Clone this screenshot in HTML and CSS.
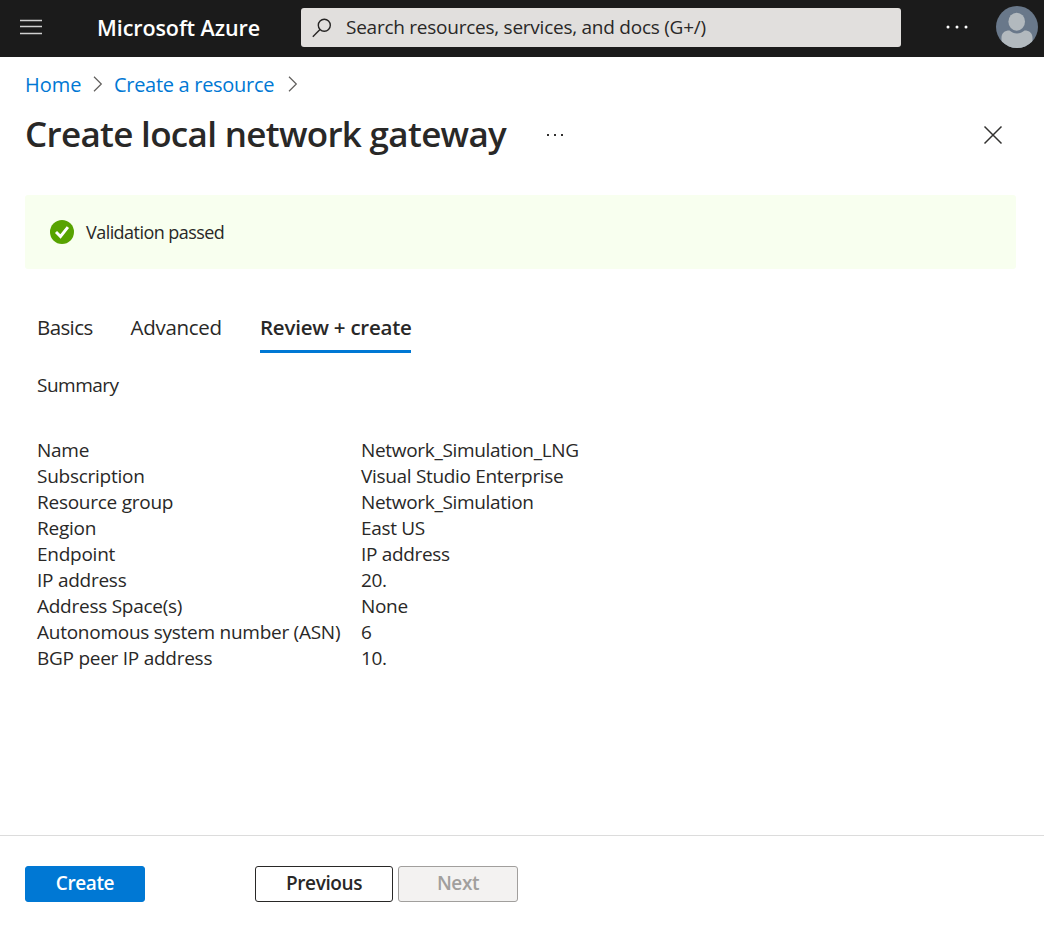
FILE: index.html
```html
<!DOCTYPE html>
<html lang="en">
<head>
<meta charset="utf-8">
<title>Create local network gateway - Microsoft Azure</title>
<link rel="stylesheet" href="styles.css">
</head>
<body>
<header class="topbar">
  <svg class="menu-icon" width="22" height="16" viewBox="0 0 22 16"><path d="M0 1.500h22M0 7.500h22M0 14.500h22" stroke="#d0d0d0" stroke-width="1.700"/></svg>
  <span class="brand">Microsoft Azure</span>
  <div class="search">
    <svg class="search-icon" width="20" height="20" viewBox="0 0 20 20" fill="none" stroke="#252423" stroke-width="1.400"><circle cx="12.300" cy="7.300" r="6"/><path d="M8 11.600L.8 18.800"/></svg>
    <span class="search-text">Search resources, services, and docs (G+/)</span>
  </div>
  <svg class="more-icon" width="22" height="4" viewBox="0 0 22 4" fill="#fff"><circle cx="2" cy="2" r="1.500"/><circle cx="11" cy="2" r="1.500"/><circle cx="20" cy="2" r="1.500"/></svg>
  <svg class="avatar" width="42" height="42" viewBox="0 0 42 42"><defs><clipPath id="disc"><circle cx="21" cy="21" r="21"/></clipPath></defs><g clip-path="url(#disc)"><path fill="#69788a" d="M0 0h42v42H0z"/><path fill="#b2b9be" d="M5.500 42V32c0-5 3-7.500 8-7.500 2.500 2 4.500 3 7.500 3s5-1 7.500-3c5 0 8 2.500 8 7.500v10z"/><ellipse cx="20.700" cy="16" rx="9.300" ry="10.200" fill="#69788a"/><ellipse cx="20.700" cy="15.700" rx="8.300" ry="9" fill="#b2b9be"/></g></svg>
</header>
<nav class="crumbs">
  <a class="crumb home">Home</a>
  <svg class="chev" width="10" height="16" viewBox="0 0 10 16" fill="none" stroke="#605e5c" stroke-width="1.200"><path d="M1 .8L8.300 8 1 15.200"/></svg>
  <a class="crumb res">Create a resource</a>
  <svg class="chev" width="10" height="16" viewBox="0 0 10 16" fill="none" stroke="#605e5c" stroke-width="1.200"><path d="M1 .8L8.300 8 1 15.200"/></svg>
</nav>
<div class="title-row">
  <h1 class="title">Create local network gateway</h1>
  <svg class="title-more" width="18" height="3" viewBox="0 0 18 3" fill="#323130"><path d="M1 0h2v2H1zM8 0h2v2H8zM15 0h2v2h-2z"/></svg>
  <svg class="close" width="20" height="20" viewBox="0 0 20 20" stroke="#323130" stroke-width="1.500"><path d="M1.500 1.500l17 17M18.500 1.500l-17 17"/></svg>
</div>
<main class="content">
  <div class="banner">
    <svg width="24" height="24" viewBox="0 0 24 24"><circle cx="12" cy="12" r="12" fill="#57a300"/><path d="M6 12l4.500 4.500 7.400-9.300" fill="none" stroke="#fff" stroke-width="2.900"/></svg>
    <span class="banner-text">Validation passed</span>
  </div>
  <div class="tabs">
    <span class="tab basics">Basics</span>
    <span class="tab advanced">Advanced</span>
    <span class="tab active">Review + create</span>
  </div>
  <h2 class="summary">Summary</h2>
  <dl class="details">
    <dt>Name</dt><dd>Network_Simulation_LNG</dd>
    <dt>Subscription</dt><dd>Visual Studio Enterprise</dd>
    <dt>Resource group</dt><dd>Network_Simulation</dd>
    <dt>Region</dt><dd>East US</dd>
    <dt>Endpoint</dt><dd>IP address</dd>
    <dt>IP address</dt><dd>20.</dd>
    <dt>Address Space(s)</dt><dd>None</dd>
    <dt>Autonomous system number (ASN)</dt><dd>6</dd>
    <dt>BGP peer IP address</dt><dd>10.</dd>
  </dl>
</main>
<footer class="footer">
  <button class="btn primary">Create</button>
  <button class="btn prev">Previous</button>
  <button class="btn next" disabled>Next</button>
</footer>
</body>
</html>
```
FILE: styles.css
```css
* { box-sizing: border-box; }
body {
  margin: 0;
  height: 930px;
  display: flex;
  flex-direction: column;
  overflow: hidden;
  background: #fff;
  color: #292827;
  font-family: "Open Sans", "Noto Sans", sans-serif;
  font-size: 19px;
  white-space: nowrap;
}
svg { display: block; flex: none; }
.topbar { height: 57px; flex: none; display: flex; align-items: center; background: #1b1b1b; padding: 0 6px 3px 20px; }
.menu-icon { margin-right: 55px; }
.brand { width: 204px; color: #fff; font-size: 21.500px; font-weight: 600; letter-spacing: -0.080px; }
.search { width: 600px; height: 39px; background: #e1dfdd; border-radius: 3px; display: flex; align-items: center; padding-left: 11px; margin-top: 1px; }
.search-text { margin-left: 14px; letter-spacing: -0.250px; padding-bottom: 2px; }
.more-icon { margin-left: 45px; }
.avatar { margin-left: auto; }
.crumbs { height: 54px; flex: none; display: flex; align-items: center; padding-left: 25px; font-size: 20px; }
.crumb { color: #0078d4; }
.home { width: 56px; }
.res { width: 162px; letter-spacing: -0.300px; }
.chev { margin: 0 11.500px; }
.title-row { height: 48px; flex: none; display: flex; align-items: center; padding: 0 41px 0 25px; }
.title { margin: 0; width: 521px; font-size: 35px; line-height: 46px; padding-bottom: 2px; font-weight: 600; letter-spacing: -0.680px; }
.close { margin-left: auto; }
.content { flex: 1; }
.banner { margin: 36px 28px 0 25px; height: 74px; border-radius: 3px; background: #f8ffef; display: flex; align-items: center; padding-left: 25px; }
.banner-text { margin-left: 12px; font-size: 18px; letter-spacing: -0.550px; }
.tabs { display: flex; margin: 34px 0 0 37px; height: 50px; font-size: 20.500px; line-height: 48px; }
.basics { width: 93.500px; letter-spacing: -0.600px; }
.advanced { width: 129.500px; letter-spacing: -0.280px; }
.active { width: 151px; border-bottom: 3px solid #0078d4; font-weight: 600; letter-spacing: -0.230px; }
.summary { margin: 18px 0 0 37px; font-size: 19px; font-weight: 400; line-height: 28px; letter-spacing: -0.500px; }
.details { margin: 38px 0 0 37px; display: grid; grid-template-columns: 324px 1fr; grid-auto-rows: 26px; line-height: 26px; }
.details dt { letter-spacing: -0.260px; }
.details dd { margin: 0; letter-spacing: -0.320px; }
.footer { height: 95px; flex: none; border-top: 1px solid #dcdcdc; display: flex; padding: 30px 25px 0; }
.btn { height: 36px; border-radius: 3px; font: 600 19px "Open Sans", sans-serif; line-height: 32px; letter-spacing: -0.400px; padding: 0 0 2px; border: 1px solid #292827; background: #fff; color: #292827; }
.primary { width: 120px; background: #0078d4; border-color: #0078d4; color: #fff; margin-right: 110px; }
.prev { width: 138px; margin-right: 5px; }
.next { width: 120px; background: #f3f2f1; border-color: #a19f9d; color: #a19f9d; }
```
